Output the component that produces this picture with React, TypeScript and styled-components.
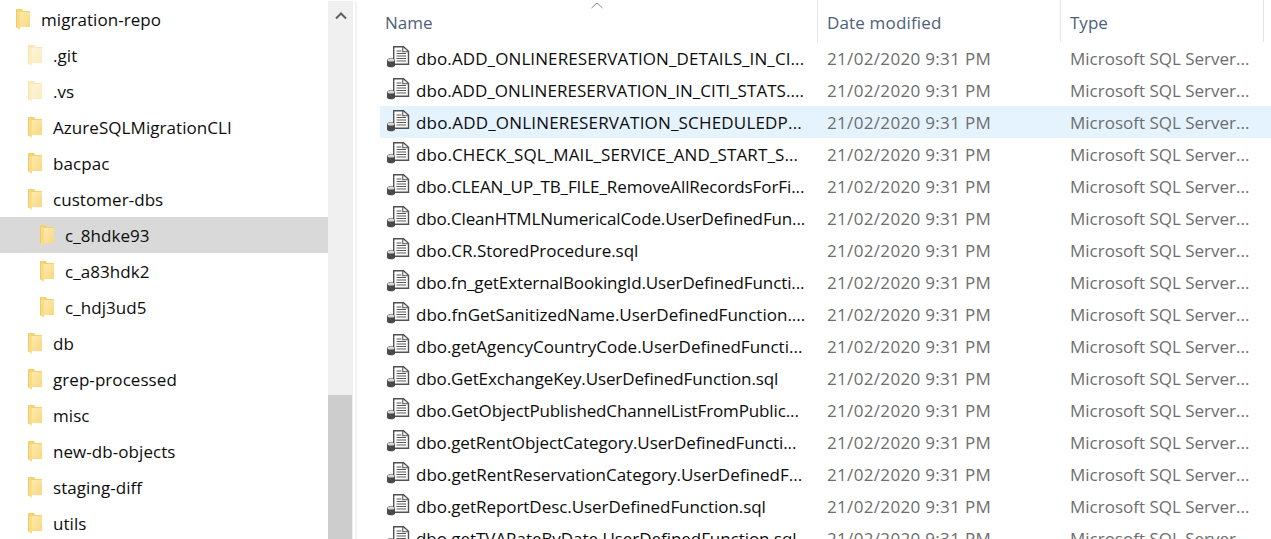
import styled, { createGlobalStyle } from "styled-components";

const GlobalStyle = createGlobalStyle`
  html, body {
    margin: 0;
    height: 100%;
    overflow: hidden;
    background: #fff;
  }
  body {
    font-family: "Open Sans", "Noto Sans", "Liberation Sans", sans-serif;
    font-size: 17px;
  }
`;

const Window = styled.div`
  display: flex;
  width: 1271px;
  height: 539px;
  overflow: hidden;
`;

const Tree = styled.div`
  width: 328px;
  flex: none;
  padding-top: 1px;
`;

const TreeRow = styled.div<{ $depth: number; $selected?: boolean }>`
  display: flex;
  align-items: center;
  height: 36px;
  padding-left: ${(p) => 16 + p.$depth * 12}px;
  background: ${(p) => (p.$selected ? "#d9d9d9" : "transparent")};
  color: #0c0c0c;
`;

const TreeLabel = styled.span`
  margin-left: 11px;
  letter-spacing: 0.06px;
  white-space: nowrap;
`;

const FolderSvg = styled.svg<{ $faded?: boolean }>`
  flex: none;
  margin-top: 1px;
  opacity: ${(p) => (p.$faded ? 0.5 : 1)};
`;

const Scrollbar = styled.div`
  width: 25px;
  flex: none;
  margin-top: 1px;
  background: #f0f0f0;
  display: flex;
  flex-direction: column;
`;

const ScrollArrow = styled.div`
  height: 30px;
  display: flex;
  justify-content: center;
  padding-top: 11px;
  box-sizing: border-box;
`;

const ScrollThumb = styled.div`
  margin-top: 364px;
  width: 24px;
  flex: 1;
  background: #cdcdcd;
`;

const Divider = styled.div`
  width: 2px;
  flex: none;
  margin: 1px 0 0 2px;
  background: #f3f3f3;
`;

const List = styled.div`
  position: relative;
  flex: 1;
  padding-left: 23px;
  min-width: 0;
`;

const SortCaret = styled.svg`
  position: absolute;
  left: 234px;
  top: 2px;
`;

const Header = styled.div`
  display: grid;
  grid-template-columns: 437px 243px 203px 1fr;
  height: 42px;
  color: #4c607a;
`;

const HeaderCell = styled.div<{ $divider?: boolean }>`
  display: flex;
  align-items: center;
  box-sizing: border-box;
  height: 42px;
  padding-top: 2px;
  padding-left: ${(p) => (p.$divider ? 9 : 5)}px;
  border-left: ${(p) => (p.$divider ? "1px solid #e5e5e5" : "none")};
`;

const DateHeading = styled.span`
  letter-spacing: 0.16px;
`;

const Row = styled.div<{ $hover?: boolean }>`
  display: grid;
  grid-template-columns: 437px 243px 1fr;
  align-items: center;
  height: 32px;
  background: ${(p) => (p.$hover ? "#e5f3ff" : "transparent")};
`;

const NameCell = styled.div`
  display: flex;
  align-items: center;
  padding-left: 6px;
  color: #0c0c0c;
  white-space: nowrap;
  overflow: hidden;
`;

const FileSvg = styled.svg`
  flex: none;
  margin-bottom: 2px;
`;

const FileName = styled.span<{ $tracking: number }>`
  margin-left: 6px;
  letter-spacing: ${(p) => p.$tracking}px;
`;

const MetaCell = styled.div<{ $tracking?: number }>`
  padding-left: 10px;
  color: #6d6d6d;
  white-space: nowrap;
  letter-spacing: ${(p) => p.$tracking ?? 0}px;
`;

function FolderIcon({ faded }: { faded?: boolean }) {
  return (
    <FolderSvg $faded={faded} width="14" height="21" viewBox="0 0 14 21">
      <defs>
        <linearGradient id="folderBody" x1="0" y1="0" x2="1" y2="1">
          <stop offset="0" stopColor="#fee9ae" />
          <stop offset="1" stopColor="#f9d880" />
        </linearGradient>
      </defs>
      <path d="M0 0h6l1 2h7v16H0z" fill="#f5d06e" />
      <path d="M4 3h10v15H4z" fill="url(#folderBody)" />
      <path d="M0 1l4 2v15.500L3.500 21 0 18z" fill="#f8dc8a" />
      <path d="M0 1l1 .5V18.800L0 18z" fill="#f2c95c" />
    </FolderSvg>
  );
}

function SqlFileIcon() {
  return (
    <FileSvg width="24" height="22" viewBox="0 0 24 22">
      <path d="M7.700 .7h9.800l5 4.500v13h-14.800z" fill="#fff" stroke="#505050" strokeWidth="1.400" />
      <path d="M16.800 .7v5h5.700" fill="none" stroke="#505050" strokeWidth="1.100" />
      <path d="M10.500 5h5M10.500 7.500h9.500M10.500 10h9.500M10.500 12.500h9.500M10.500 15h9.500" stroke="#5a5a5a" strokeWidth="1.100" />
      <path d="M1 14c0-2.500 8-2.500 8 0v5.500c0 2.400-8 2.400-8 0z" fill="#4a4a4a" />
      <ellipse cx="5" cy="14" rx="3.500" ry="1.500" fill="#d8d8d8" />
    </FileSvg>
  );
}

const folders = [
  { name: "migration-repo", depth: 0 },
  { name: ".git", depth: 1, faded: true },
  { name: ".vs", depth: 1, faded: true },
  { name: "AzureSQLMigrationCLI", depth: 1 },
  { name: "bacpac", depth: 1 },
  { name: "customer-dbs", depth: 1 },
  { name: "c_8hdke93", depth: 2, selected: true },
  { name: "c_a83hdk2", depth: 2 },
  { name: "c_hdj3ud5", depth: 2 },
  { name: "db", depth: 1 },
  { name: "grep-processed", depth: 1 },
  { name: "misc", depth: 1 },
  { name: "new-db-objects", depth: 1 },
  { name: "staging-diff", depth: 1 },
  { name: "utils", depth: 1 },
];

// Open Sans runs a little off the original font, so each name gets its own tracking
const files = [
  { name: "dbo.ADD_ONLINERESERVATION_DETAILS_IN_CI...", tracking: 0.1 },
  { name: "dbo.ADD_ONLINERESERVATION_IN_CITI_STATS....", tracking: 0.05 },
  { name: "dbo.ADD_ONLINERESERVATION_SCHEDULEDP...", tracking: 0.18 },
  { name: "dbo.CHECK_SQL_MAIL_SERVICE_AND_START_S...", tracking: 0.12 },
  { name: "dbo.CLEAN_UP_TB_FILE_RemoveAllRecordsForFi...", tracking: -0.09 },
  { name: "dbo.CleanHTMLNumericalCode.UserDefinedFun...", tracking: -0.14 },
  { name: "dbo.CR.StoredProcedure.sql", tracking: -0.04 },
  { name: "dbo.fn_getExternalBookingId.UserDefinedFuncti...", tracking: -0.11 },
  { name: "dbo.fnGetSanitizedName.UserDefinedFunction....", tracking: 0 },
  { name: "dbo.getAgencyCountryCode.UserDefinedFuncti...", tracking: 0 },
  { name: "dbo.GetExchangeKey.UserDefinedFunction.sql", tracking: -0.12 },
  { name: "dbo.GetObjectPublishedChannelListFromPublic...", tracking: -0.13 },
  { name: "dbo.getRentObjectCategory.UserDefinedFuncti...", tracking: -0.09 },
  { name: "dbo.getRentReservationCategory.UserDefinedF...", tracking: -0.02 },
  { name: "dbo.getReportDesc.UserDefinedFunction.sql", tracking: -0.05 },
  { name: "dbo.getTVARateByDate.UserDefinedFunction.sql", tracking: -0.05 },
];

export default function App() {
  return (
    <Window>
      <GlobalStyle />
      <Tree>
        {folders.map((f) => (
          <TreeRow key={f.name} $depth={f.depth} $selected={f.selected}>
            <FolderIcon faded={f.faded} />
            <TreeLabel>{f.name}</TreeLabel>
          </TreeRow>
        ))}
      </Tree>
      <Scrollbar>
        <ScrollArrow>
          <svg width="12" height="8" viewBox="0 0 12 8">
            <path d="M1 6.500l5-5 5 5" fill="none" stroke="#606060" strokeWidth="2" />
          </svg>
        </ScrollArrow>
        <ScrollThumb />
      </Scrollbar>
      <Divider />
      <List>
        <SortCaret width="12" height="7" viewBox="0 0 12 7">
          <path d="M.5 6l5.500-5 5.500 5" fill="none" stroke="#8a8a8a" strokeWidth="1" />
        </SortCaret>
        <Header>
          <HeaderCell>Name</HeaderCell>
          <HeaderCell $divider>
            <DateHeading>Date modified</DateHeading>
          </HeaderCell>
          <HeaderCell $divider>Type</HeaderCell>
          <HeaderCell $divider />
        </Header>
        {files.map((f, i) => (
          <Row key={f.name} $hover={i === 2}>
            <NameCell>
              <SqlFileIcon />
              <FileName $tracking={f.tracking}>{f.name}</FileName>
            </NameCell>
            <MetaCell $tracking={0.33}>21/02/2020 9:31 PM</MetaCell>
            <MetaCell>Microsoft SQL Server...</MetaCell>
          </Row>
        ))}
      </List>
    </Window>
  );
}
